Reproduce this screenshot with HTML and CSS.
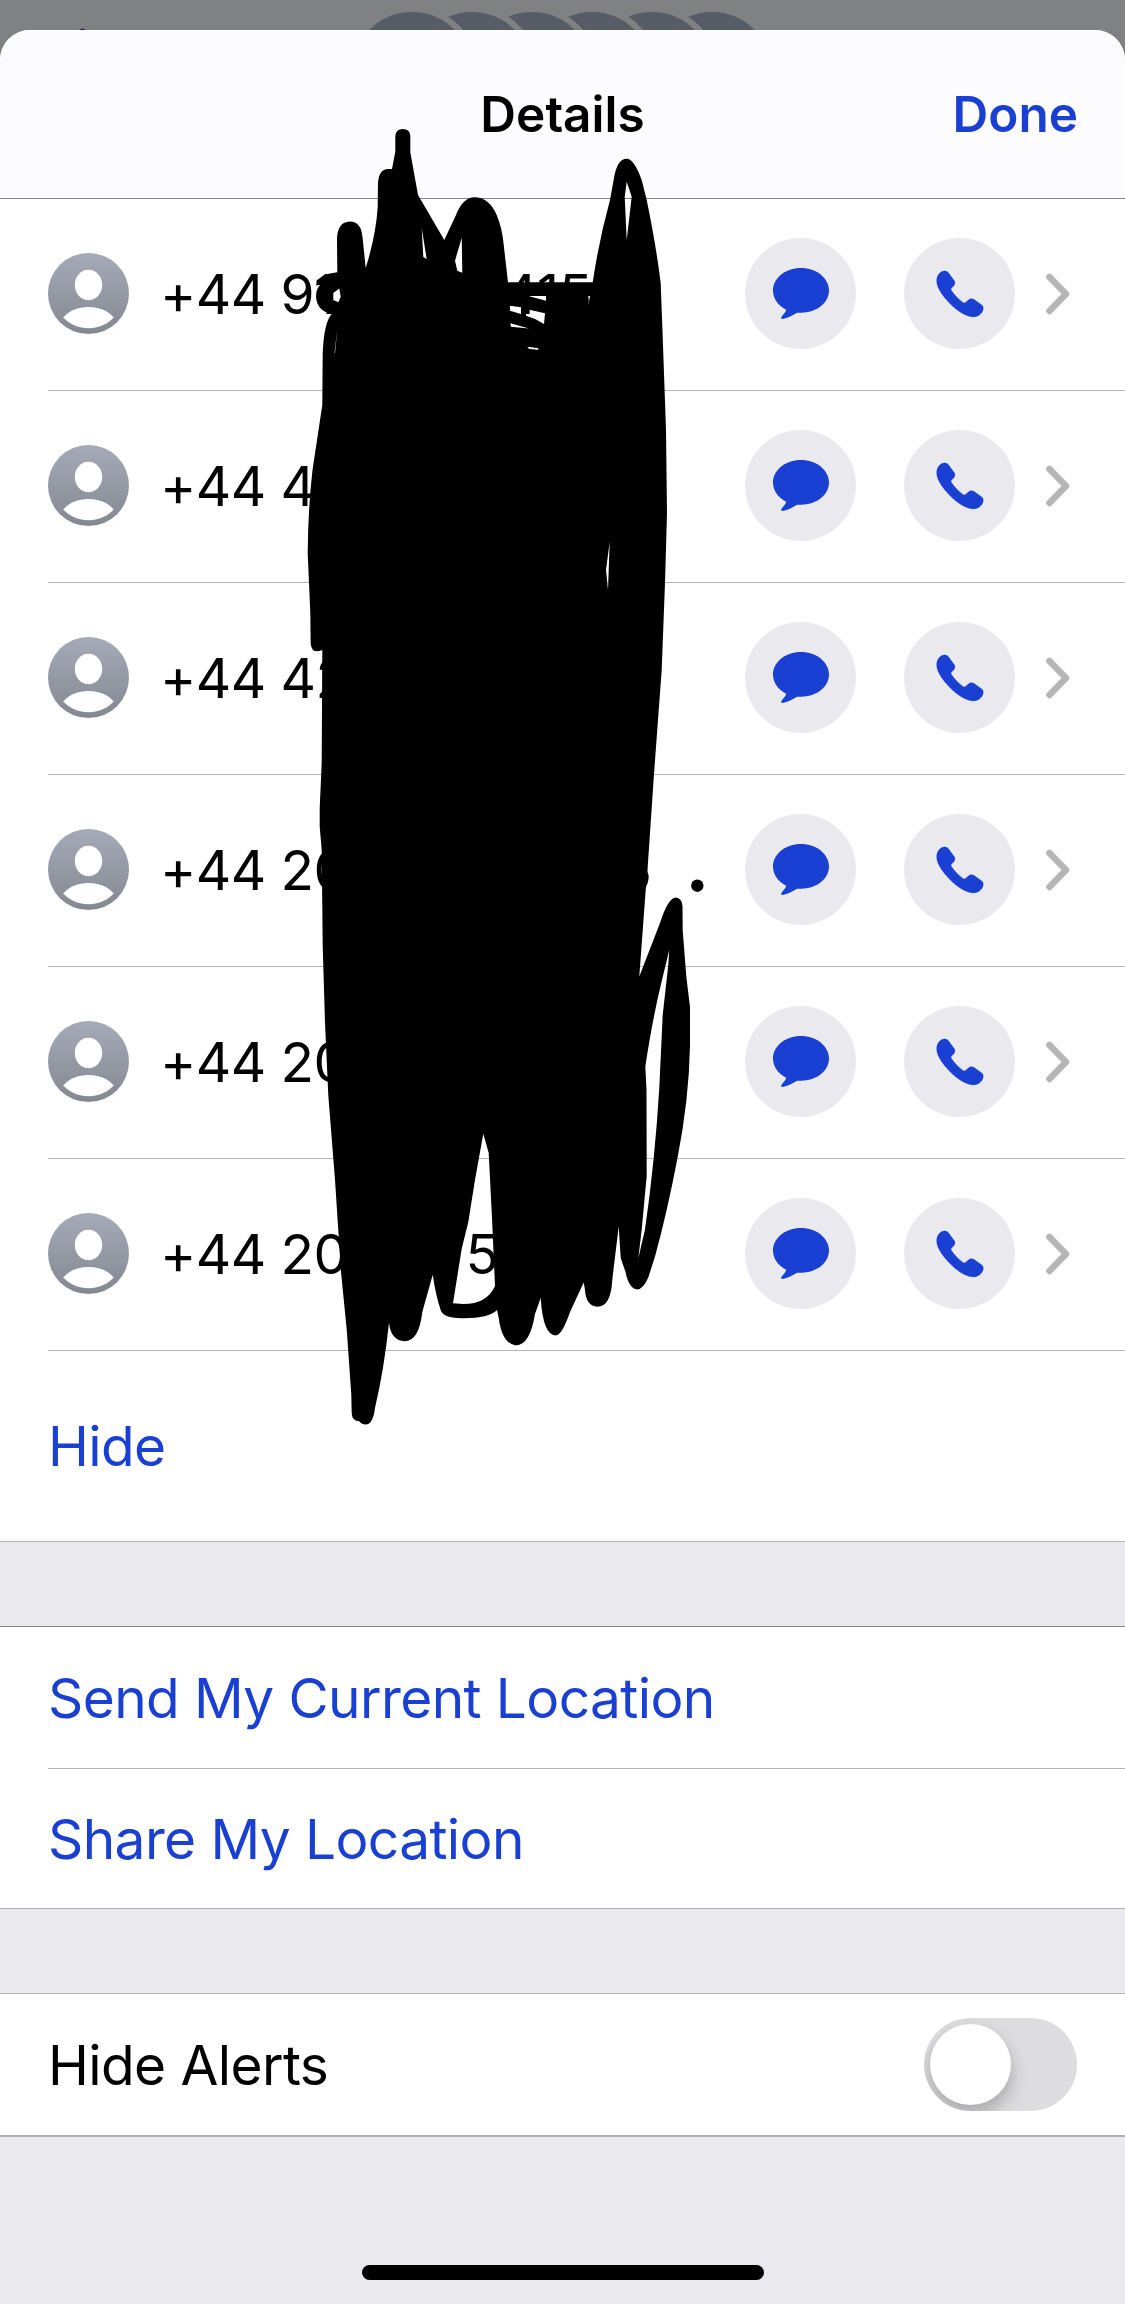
FILE: index.html
```html
<!DOCTYPE html>
<html lang="en">
<head>
  <meta charset="UTF-8">
  <meta name="viewport" content="width=device-width, initial-scale=1">
  <title>Details</title>
  <link rel="stylesheet" href="styles.css">
</head>
<body>

  <!-- Shared icons -->
  <svg class="sprite" width="0" height="0">
    <defs>
      <linearGradient id="avatarFill" x1="0" y1="0" x2="0" y2="1">
        <stop offset="0" stop-color="#a6aab7"/>
        <stop offset="1" stop-color="#848891"/>
      </linearGradient>
    </defs>
    <symbol id="avatar" viewBox="0 0 81 81">
      <circle cx="40.5" cy="40.5" r="40.5" fill="url(#avatarFill)"/>
      <ellipse cx="40.5" cy="32" rx="13.7" ry="15.2" fill="#fff"/>
      <path d="M15.3 64.5C21 57.5 30 54 40.5 54S60 57.5 65.7 64.5C59 71.5 50 75.3 40.5 75.3S22 71.5 15.3 64.5Z" fill="#fff"/>
    </symbol>
    <symbol id="message" viewBox="0 0 111 111">
      <path d="M56 30C71.5 30 84 40 84 52.5S71.5 74.7 56 74.7L52 74.7C47.5 77.5 43 80 37.5 81C36 81 35.8 79.5 36.7 78.5C38.5 76.3 40.5 74.5 41.2 71.8C33 67.5 28 60.5 28 52.5C28 40 40.5 30 56 30Z"/>
    </symbol>
    <symbol id="call" viewBox="0 0 111 111">
      <path d="M32.5 43C32.5 37 36 32.7 41 32.7C42.8 32.7 44 33.8 44.8 35L50.5 42.8C51.5 44.3 51.2 46.2 50.2 47.5L47.5 50.3C47 51 47.2 51.8 47.6 52.5C50 56.3 54.5 61 58.5 63.9C59.8 64.9 61 64.9 62.2 63.8L64.5 61.7C66 60.3 68.2 60.2 70 61.3L78 67C79.7 68.3 79.9 70.5 78.9 72.7C77 76.8 73.5 79 69 79C61.5 79 52.5 72.5 45.5 65.3C38 57.5 32.5 49.5 32.5 43Z"/>
    </symbol>
    <symbol id="chevron" viewBox="0 0 24 42">
      <path d="M3.5 4L20 21L3.5 38" fill="none" stroke="#b5b5b6" stroke-width="6.6" stroke-linecap="round" stroke-linejoin="round"/>
    </symbol>
  </svg>

  <div class="screen">
    <!-- Dimmed conversation behind the sheet -->
    <svg class="backdrop" width="1125" height="80" viewBox="0 0 1125 80">
      <g fill="#575c67" stroke="#808182" stroke-width="6">
        <circle cx="712" cy="72" r="63"/>
        <circle cx="652" cy="72" r="63"/>
        <circle cx="592" cy="72" r="63"/>
        <circle cx="532" cy="72" r="63"/>
        <circle cx="472" cy="72" r="63"/>
        <circle cx="412" cy="72" r="63"/>
      </g>
      <circle cx="82.500" cy="31.500" r="3" fill="#1c2a66"/>
    </svg>

    <div class="sheet">
      <header class="header">
        <span></span>
        <h1 class="title">Details</h1>
        <a class="done">Done</a>
      </header>

      <ul class="list contacts">
        <li class="contact">
          <svg class="avatar"><use href="#avatar"/></svg>
          <span class="number">+44 91<span class="tail-415">415</span></span>
          <span class="round-btn"><svg><use href="#message"/></svg></span>
          <span class="round-btn"><svg><use href="#call"/></svg></span>
          <svg class="chevron"><use href="#chevron"/></svg>
        </li>
        <li class="contact">
          <svg class="avatar"><use href="#avatar"/></svg>
          <span class="number">+44 4</span>
          <span class="round-btn"><svg><use href="#message"/></svg></span>
          <span class="round-btn"><svg><use href="#call"/></svg></span>
          <svg class="chevron"><use href="#chevron"/></svg>
        </li>
        <li class="contact">
          <svg class="avatar"><use href="#avatar"/></svg>
          <span class="number">+44 42</span>
          <span class="round-btn"><svg><use href="#message"/></svg></span>
          <span class="round-btn"><svg><use href="#call"/></svg></span>
          <svg class="chevron"><use href="#chevron"/></svg>
        </li>
        <li class="contact">
          <svg class="avatar"><use href="#avatar"/></svg>
          <span class="number">+44 20</span>
          <span class="round-btn"><svg><use href="#message"/></svg></span>
          <span class="round-btn"><svg><use href="#call"/></svg></span>
          <svg class="chevron"><use href="#chevron"/></svg>
        </li>
        <li class="contact">
          <svg class="avatar"><use href="#avatar"/></svg>
          <span class="number">+44 20</span>
          <span class="round-btn"><svg><use href="#message"/></svg></span>
          <span class="round-btn"><svg><use href="#call"/></svg></span>
          <svg class="chevron"><use href="#chevron"/></svg>
        </li>
        <li class="contact">
          <svg class="avatar"><use href="#avatar"/></svg>
          <span class="number">+44 20<span class="tail-5">5</span></span>
          <span class="round-btn"><svg><use href="#message"/></svg></span>
          <span class="round-btn"><svg><use href="#call"/></svg></span>
          <svg class="chevron"><use href="#chevron"/></svg>
        </li>
        <li class="row row-tall link">Hide</li>
      </ul>

      <ul class="list location">
        <li class="row link send">Send My Current Location</li>
        <li class="row link share">Share My Location</li>
      </ul>

      <ul class="list alerts">
        <li class="row">
          <span class="alerts-label">Hide Alerts</span>
          <span class="toggle"><span class="knob"></span></span>
        </li>
      </ul>

      <div class="home-bar"></div>
    </div>

    <!-- Marker scribble over the numbers -->
    <svg class="scribble" width="1125" height="2304" viewBox="0 0 1125 2304">
      <path fill-rule="evenodd" d="M337.3 272.3L337 240Q337 222 350 221.5Q361 221.5 362.5 237L365.7 268Q376 235 377.7 207L378 183Q379 169 388 169L392 169L395.3 151.7L395.3 136Q396 129 402.7 129Q410 129 410.3 136L410.3 152.3L418 195L444.3 240L456 215Q463 197.3 474.5 197.3Q489 197.3 496.7 215Q502 228 503.5 243L508 282.3L592.7 282.3Q599 240 610 200L614 178Q617 159 626.7 158.7Q634 158.7 641.7 180L646.7 200Q656 245 660.7 283L662.7 336.7L666 430L667 513L665 583L661.7 670L654 774L647.7 867L647.5 872Q650.5 878 646 887L645.7 890L639.3 976.5L660 922.9Q668 898 675.7 897.5Q682 898 682.5 906L682.7 930.5L686.3 976.5L690 1007L690 1045.5Q689 1100 677.3 1159Q667 1213 655 1256.4L648.3 1277.5Q643 1289.4 637.3 1289.4Q629 1289 625.5 1272L620.7 1258L618.7 1226.5L612.3 1279.4Q611 1306.7 597.3 1306.7Q586 1306 585 1290L583.7 1282.5L570 1312Q562 1335.4 555.7 1335.4Q543 1335 540.7 1297.9L535 1314Q530 1345 516 1345.4Q502 1344 498.7 1317.8L497 1310Q489 1318.2 463.3 1318.2Q445 1318.5 441 1311Q436 1297 432.7 1274.8L422.3 1312Q419 1341.2 404.7 1341.2Q391 1341 389 1322.8Q384 1370 375 1407.9Q373 1424.4 365.7 1424.4Q361 1424.4 359.3 1421.3Q352 1421 351.7 1413L351.3 1394.5L346.7 1329.3L341 1271.8L335 1179.8L328.3 1095.4L325 1022.5L322.7 945.9L321.7 850L319.7 826.7L319.7 808L321.7 763L322.3 650Q312 654.5 310.7 644L310.3 613L307.7 553Q308 510 312.5 470L322.3 405L322.7 353.3Q324 322 331.7 314Q317 311 316 296.7Q316 289 320 285L316.5 285L317 281Q325 274 330 273.5Z
        M333.3 293L339.3 288.5L340.7 296.7L338.3 302.3L333.3 300Z
        M421.7 228L426.7 259L423.3 257Z
        M461.7 237.7L462.3 272.7L457.3 270.7L455 260.7Z
        M626.7 181.7L631.7 196.7L626.7 240L624.7 196.7Z
        M528.3 296L546 296L546 300.7Z
        M510 305.7L521 307.3L521 314L510 310.7Z
        M526 309L545 313.3L544 324Q535 318 526 315.7Z
        M510.3 323.3L529 328.5L511 326.7Z
        M527.3 346.7L538.7 348.3L538 349.7L529.3 349Z
        M588.3 296L590 296L588.3 305Z
        M337.3 329L335 353L334.5 353Z
        M609.7 541.7L608 590L606 570Z
        M483.3 1133.7L488.7 1153L492 1218L495 1286Q487 1304 463.3 1304L453 1303.2L461.7 1248.8L468.3 1222L475 1179.8Z
        M669.3 949.7L668.3 965L662.7 1014.9L659.3 1087.7Q655 1160 645 1229.6L638.3 1258.4L641.7 1229.6L646.7 1176L646.5 1090L645.3 1066.6Q653 1016 662 980Z"/>
      <circle cx="697.3" cy="885.7" r="6.2"/>
    </svg>
  </div>

</body>
</html>
```

FILE: styles.css
```css
/* Page */
body {
  margin: 0;
  background: #808182;
  font-family: Inter, "Liberation Sans", sans-serif;
  color: #000;
}

ul {
  list-style: none;
  margin: 0;
  padding: 0;
}

.sprite {
  position: absolute;
}

.screen {
  position: relative;
  width: 1125px;
  height: 2304px;
  padding-top: 30px;
  box-sizing: border-box;
  overflow: hidden;
}

.backdrop {
  position: absolute;
  top: 0;
  left: 0;
}

/* Sheet */
.sheet {
  position: relative;
  display: flex;
  flex-direction: column;
  height: 2274px;
  background: #eae9ee;
  border-radius: 30px 30px 0 0;
  overflow: hidden;
}

.header {
  display: grid;
  grid-template-columns: 1fr auto 1fr;
  align-items: center;
  height: 168px;
  padding: 0 47px;
  background: #fcfcfe;
  border-bottom: 1px solid #858589;
}

.title,
.done {
  margin: 0;
  font-size: 49.5px;
  font-weight: 600;
  line-height: 60px;
}

.done {
  justify-self: end;
  color: #193fd3;
}

/* Lists */
.list {
  background: #fff;
}

.contact {
  display: flex;
  align-items: center;
  height: 191px;
  margin-left: 48px;
  padding-right: 55px;
  padding-bottom: 2px;
  box-sizing: border-box;
  border-bottom: 1px solid #b4b4b6;
  height: 192px;
}

.avatar {
  width: 81px;
  height: 81px;
  margin-right: 31px;
}

.number {
  flex: 1;
  font-size: 55px;
  line-height: 66px;
  letter-spacing: -0.6px;
  white-space: nowrap;
}

.tail-415 {
  margin-left: 167px;
}

.tail-5 {
  margin-left: 118px;
}

.round-btn {
  width: 111px;
  height: 111px;
  margin-right: 48px;
  border-radius: 50%;
  background: #eae9ee;
}

.round-btn svg {
  display: block;
  width: 111px;
  height: 111px;
  fill: #193fd3;
}

.round-btn + .chevron {
  width: 24px;
  height: 42px;
  margin-left: -17px;
}

.row {
  display: flex;
  align-items: center;
  justify-content: space-between;
  height: 141px;
  margin-left: 48px;
  padding-right: 48px;
  font-size: 55px;
  line-height: 66px;
  letter-spacing: -0.6px;
}

.row-tall {
  height: 190px;
}

.link {
  color: #193fd3;
}

.contacts {
  border-bottom: 1px solid #b4b4b6;
}

.location {
  margin-top: 84px;
  border-top: 1px solid #858589;
  border-bottom: 1px solid #b4b4b6;
}

.send {
  border-bottom: 1px solid #b4b4b6;
}

.share {
  height: 139px;
}

.alerts {
  margin-top: 84px;
  border-top: 1px solid #b4b4b6;
  border-bottom: 2px solid #b0b0b3;
}

/* Switch */
.toggle {
  width: 153px;
  height: 93px;
  padding: 6px;
  box-sizing: border-box;
  border-radius: 47px;
  background: #dddddf;
  overflow: hidden;
}

.knob {
  display: block;
  width: 81px;
  height: 81px;
  border-radius: 50%;
  background: #fff;
  box-shadow: 0 9px 18px rgba(0, 0, 0, 0.25);
}

.home-bar {
  width: 402px;
  height: 15px;
  margin: auto auto 24px;
  border-radius: 8px;
  background: #000;
}

.scribble {
  position: absolute;
  top: 0;
  left: 0;
  pointer-events: none;
}
```
